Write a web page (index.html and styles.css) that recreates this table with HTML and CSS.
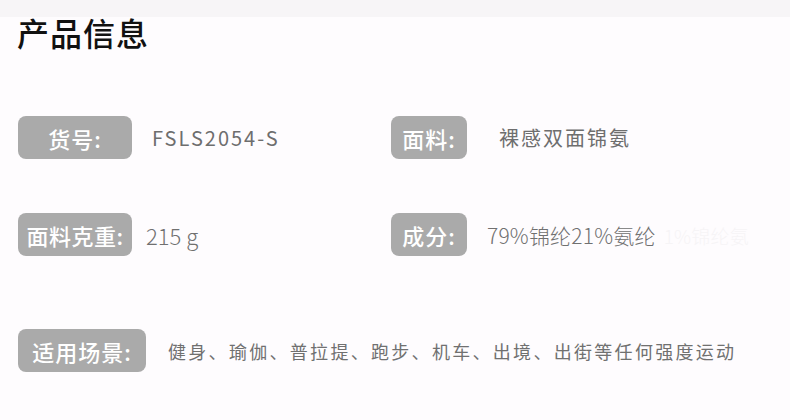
FILE: index.html
```html
<!DOCTYPE html>
<html lang="zh">
<head>
<meta charset="utf-8">
<link rel="stylesheet" href="styles.css">
</head>
<body>
<div class="topbar"></div>
<h1 class="title">产品信息</h1>
<div class="rows">
  <div class="row row1">
    <div class="cell">
      <span class="tag w114">货号:</span>
      <span class="val code">FSLS2054-S</span>
    </div>
    <div class="cell">
      <span class="tag w76">面料:</span>
      <span class="val spaced">裸感双面锦氨</span>
    </div>
  </div>
  <div class="row row2">
    <div class="cell">
      <span class="tag w114 tight">面料克重:</span>
      <span class="val num">215 g</span>
    </div>
    <div class="cell">
      <span class="tag w76">成分:</span>
      <span class="val comp">79%锦纶21%氨纶<span class="ghost">1%锦纶氨</span></span>
    </div>
  </div>
  <div class="row row3">
    <div class="cell wide">
      <span class="tag w128">适用场景:</span>
      <span class="val scene">健身、瑜伽、普拉提、跑步、机车、出境、出街等任何强度运动</span>
    </div>
  </div>
</div>
</body>
</html>
```
FILE: styles.css
```css
html, body {
  margin: 0;
  padding: 0;
  background: #fefcfe;
  font-family: "Noto Sans CJK SC", "Noto Sans", sans-serif;
}
.topbar {
  height: 17px;
  background: #f7f5f7;
}
.title {
  margin: 0;
  padding-left: 17px;
  font-size: 32px;
  line-height: 30px;
  font-weight: 500;
  color: #111;
  letter-spacing: 1px;
}
.rows {
  padding-left: 18px;
}
.row {
  display: grid;
  grid-template-columns: 373px 1fr;
  height: 43px;
}
.row1 { margin-top: 69px; }
.row2 { margin-top: 54px; }
.row3 { margin-top: 73px; }
.cell {
  display: flex;
  align-items: center;
}
.cell.wide { grid-column: 1 / 3; }
.tag {
  height: 43px;
  box-sizing: border-box;
  display: flex;
  align-items: center;
  justify-content: center;
  background: #aaaaaa;
  border-radius: 8px;
  color: #fff;
  font-size: 22px;
  font-weight: 500;
  letter-spacing: 1px;
}
.w114 { width: 114px; }
.w76 { width: 76px; }
.w128 { width: 128px; }
.tag.tight { letter-spacing: 0.5px; }
.val {
  color: #6e6e6e;
  font-size: 20px;
  white-space: nowrap;
}
.code { margin-left: 20px; letter-spacing: 2px; }
.spaced { margin-left: 32px; letter-spacing: 2px; }
.num { margin-left: 14px; font-size: 22px; font-weight: 300; color: #707070; }
.comp { margin-left: 20px; font-size: 21px; letter-spacing: 0.2px; font-weight: 300; color: #707070; }
.ghost { color: #f6f4f6; margin-left: 8px; font-size: 19px; }
.scene { margin-left: 22px; font-size: 18px; letter-spacing: 2.3px; color: #707070; }
```
